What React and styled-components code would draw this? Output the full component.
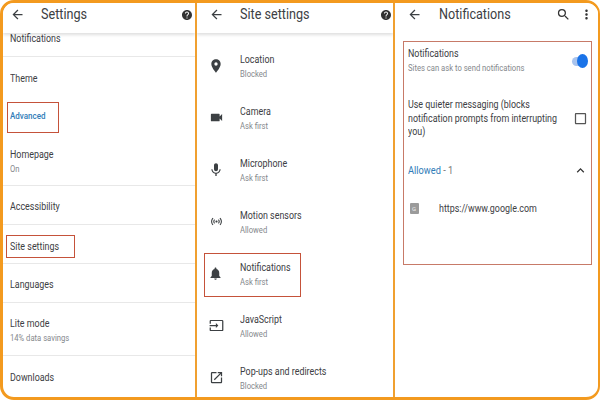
import React from "react";
import styled, { createGlobalStyle, css } from "styled-components";
import {
  MdArrowBack,
  MdHelp,
  MdPlace,
  MdVideocam,
  MdMic,
  MdSensors,
  MdNotifications,
  MdInput,
  MdOpenInNew,
  MdSearch,
  MdMoreVert,
  MdCheckBoxOutlineBlank,
  MdExpandLess,
} from "react-icons/md";

const GlobalStyle = createGlobalStyle`
  html, body {
    margin: 0;
    padding: 0;
    background: #fff;
    font-family: Roboto, "Liberation Sans", sans-serif;
  }
`;

// the screenshot is squeezed sideways, so the type is narrower than Roboto
const squeeze = (x) => css`
  transform: scaleX(${x});
  transform-origin: left center;
`;

const Frame = styled.div`
  box-sizing: border-box;
  width: 600px;
  height: 400px;
  border: solid #f39a1f;
  border-width: 3px 2px 3px 3px;
  border-radius: 14px;
  overflow: hidden;
  display: grid;
  grid-template-columns: 192px 198px 1fr;
  background: #fff;
`;

const Panel = styled.section`
  display: flex;
  flex-direction: column;
  min-width: 0;
  overflow: hidden;
  border-left: ${(p) => (p.$first ? "none" : "2px solid #f0a030")};
`;

const Header = styled.header`
  box-sizing: border-box;
  flex: 0 0 30px;
  display: flex;
  align-items: center;
  padding: 0 ${(p) => p.$right}px 7px ${(p) => p.$left}px;
  color: #3c4043;
  box-shadow: ${(p) => (p.$flat ? "none" : "0 2px 3px rgba(0, 0, 0, 0.13)")};
  z-index: 1;
  background: #fff;
`;

const Title = styled.h1`
  flex: 1;
  margin: 0 0 0 ${(p) => p.$gap}px;
  font-size: 14.5px;
  font-weight: 400;
  color: #3c4043;
  white-space: nowrap;
  ${squeeze(0.87)}
`;

const HeaderIcon = styled.span`
  display: inline-flex;
  color: #333;
  margin-left: ${(p) => p.$gap || 0}px;
`;

const Label = styled.div`
  font-size: 10px;
  line-height: 14px;
  color: #3d4043;
  white-space: nowrap;
  ${squeeze(0.89)}
`;

const AccentLabel = styled(Label)`
  font-size: 9px;
  font-weight: 500;
  color: #2f7cb8;
  margin-top: -2px;
`;

const Sub = styled.div`
  font-size: 8.5px;
  line-height: 14px;
  color: #85888c;
  white-space: nowrap;
  ${squeeze(0.9)}
`;

const Body = styled.div`
  flex: 1;
  overflow: hidden;
`;

const SettingRow = styled.div`
  box-sizing: border-box;
  height: ${(p) => p.$h}px;
  padding: ${(p) => p.$top ?? 4}px 0 0 7px;
  display: flex;
  flex-direction: column;
  justify-content: center;
  border-bottom: ${(p) => (p.$plain ? "none" : "1.5px solid #e8e8e8")};
`;

// first row is scrolled partly under the header
const ScrolledRow = styled(SettingRow)`
  justify-content: flex-end;
  padding: 0 0 10.5px 7px;
`;

const Marked = styled.div`
  box-sizing: border-box;
  align-self: flex-start;
  display: flex;
  align-items: center;
  height: ${(p) => p.$h}px;
  width: ${(p) => p.$w}px;
  margin-left: -${(p) => p.$out}px;
  padding-left: ${(p) => p.$out - 1.5}px;
  border: 1.5px solid #c5523a;
`;

const SiteList = styled.div`
  padding-top: 8px;
`;

const SiteRow = styled.div`
  box-sizing: border-box;
  height: 52px;
  display: flex;
  align-items: center;
  padding-left: 11px;
  color: #3c4043;
`;

const SiteMarked = styled(SiteRow)`
  width: 97px;
  height: 44px;
  margin: 4px 0 4px 7px;
  padding-left: 2.5px;
  border: 1.5px solid #c5523a;
`;

const IconSlot = styled.div`
  flex: 0 0 32px;
  display: flex;
  align-items: center;
  margin-top: -3px;
`;

const Glyph = styled.span`
  width: 16px;
  display: flex;
  justify-content: center;
`;

const NotifBox = styled.div`
  box-sizing: border-box;
  height: 224px;
  margin: 8px 6px 0 8px;
  padding: 5px 3px 0 3.5px;
  border: 1.5px solid #c77a68;
  color: #3c4043;
`;

const ToggleRow = styled.div`
  display: flex;
  align-items: center;
  justify-content: space-between;
`;

const Track = styled.div`
  position: relative;
  width: 15px;
  height: 9px;
  margin-right: 1px;
  border-radius: 5px;
  background: #a9c4ee;
`;

const Knob = styled.div`
  position: absolute;
  right: -1px;
  top: -3px;
  width: 11px;
  height: 14px;
  border-radius: 50%;
  background: #1a73e8;
`;

const QuietRow = styled.div`
  display: flex;
  align-items: center;
  justify-content: space-between;
  margin-top: 23px;
`;

const QuietText = styled(Label)`
  flex: none;
  width: 172px;
  margin-right: -22px;
  line-height: 13.5px;
  white-space: normal;
`;

const AllowedRow = styled.div`
  display: flex;
  align-items: center;
  justify-content: space-between;
  margin-top: 24px;
`;

const AllowedTitle = styled.div`
  font-size: 10.5px;
  color: #2f7cb8;
  white-space: nowrap;
  ${squeeze(0.88)}
`;

const AllowedCount = styled.span`
  color: #777;
`;

const SiteEntry = styled.div`
  display: flex;
  align-items: center;
  margin-top: 24px;
  padding-left: 2px;
`;

const SiteUrl = styled.div`
  font-size: 10.5px;
  color: #3d4043;
  white-space: nowrap;
  ${squeeze(0.85)}
`;

const Favicon = styled.div`
  width: 9px;
  height: 11px;
  margin-right: 20px;
  border-radius: 1px;
  background: #9b9b9b;
  color: #eee;
  font-size: 6px;
  line-height: 11px;
  text-align: center;
`;

const sites = [
  { icon: MdPlace, size: 16, label: "Location", sub: "Blocked" },
  { icon: MdVideocam, size: 15, label: "Camera", sub: "Ask first" },
  { icon: MdMic, size: 16, label: "Microphone", sub: "Ask first" },
  { icon: MdSensors, size: 13, label: "Motion sensors", sub: "Allowed" },
  { icon: MdNotifications, size: 15, label: "Notifications", sub: "Ask first", marked: true },
  { icon: MdInput, size: 15, label: "JavaScript", sub: "Allowed" },
  { icon: MdOpenInNew, size: 15, label: "Pop-ups and redirects", sub: "Blocked" },
];

const AppHeader = ({ title, gap, left, right, flat, children }) => (
  <Header $left={left} $right={right} $flat={flat}>
    <MdArrowBack size={15} />
    <Title $gap={gap}>{title}</Title>
    {children}
  </Header>
);

const SettingsPanel = () => (
  <Panel $first>
    <AppHeader title="Settings" gap={16} left={7} right={2}>
      <HeaderIcon>
        <MdHelp size={12} />
      </HeaderIcon>
    </AppHeader>
    <Body>
      <ScrolledRow $h={24}>
        <Label>Notifications</Label>
      </ScrolledRow>
      <SettingRow $h={41} $plain $top={2}>
        <Label>Theme</Label>
      </SettingRow>
      <SettingRow $h={38} $plain $top={0}>
        <Marked $w={52} $h={31} $out={3}>
          <AccentLabel>Advanced</AccentLabel>
        </Marked>
      </SettingRow>
      <SettingRow $h={50} $top={2}>
        <Label>Homepage</Label>
        <Sub>On</Sub>
      </SettingRow>
      <SettingRow $h={39}>
        <Label>Accessibility</Label>
      </SettingRow>
      <SettingRow $h={39} $top={5}>
        <Marked $w={69} $h={23} $out={4}>
          <Label>Site settings</Label>
        </Marked>
      </SettingRow>
      <SettingRow $h={39}>
        <Label>Languages</Label>
      </SettingRow>
      <SettingRow $h={53}>
        <Label>Lite mode</Label>
        <Sub>14% data savings</Sub>
      </SettingRow>
      <SettingRow $h={39} $plain>
        <Label>Downloads</Label>
      </SettingRow>
    </Body>
  </Panel>
);

const SitePanel = () => (
  <Panel>
    <AppHeader title="Site settings" gap={16} left={12} right={1}>
      <HeaderIcon>
        <MdHelp size={12} />
      </HeaderIcon>
    </AppHeader>
    <SiteList>
      {sites.map(({ icon: Icon, size, label, sub, marked }) => {
        const Row = marked ? SiteMarked : SiteRow;
        return (
          <Row key={label}>
            <IconSlot>
              <Glyph>
                <Icon size={size} />
              </Glyph>
            </IconSlot>
            <div>
              <Label>{label}</Label>
              <Sub>{sub}</Sub>
            </div>
          </Row>
        );
      })}
    </SiteList>
  </Panel>
);

const NotificationsPanel = () => (
  <Panel>
    <AppHeader title="Notifications" gap={17} left={12} right={4} flat>
      <HeaderIcon>
        <MdSearch size={15} />
      </HeaderIcon>
      <HeaderIcon $gap={8}>
        <MdMoreVert size={15} />
      </HeaderIcon>
    </AppHeader>
    <NotifBox>
      <ToggleRow>
        <div>
          <Label>Notifications</Label>
          <Sub>Sites can ask to send notifications</Sub>
        </div>
        <Track>
          <Knob />
        </Track>
      </ToggleRow>
      <QuietRow>
        <QuietText>Use quieter messaging (blocks notification prompts from interrupting you)</QuietText>
        <MdCheckBoxOutlineBlank size={15} color="#555" />
      </QuietRow>
      <AllowedRow>
        <AllowedTitle>
          Allowed <AllowedCount>- 1</AllowedCount>
        </AllowedTitle>
        <MdExpandLess size={15} color="#333" />
      </AllowedRow>
      <SiteEntry>
        <Favicon>G</Favicon>
        <SiteUrl>https://www.google.com</SiteUrl>
      </SiteEntry>
    </NotifBox>
  </Panel>
);

export default function App() {
  return (
    <>
      <GlobalStyle />
      <Frame>
        <SettingsPanel />
        <SitePanel />
        <NotificationsPanel />
      </Frame>
    </>
  );
}
